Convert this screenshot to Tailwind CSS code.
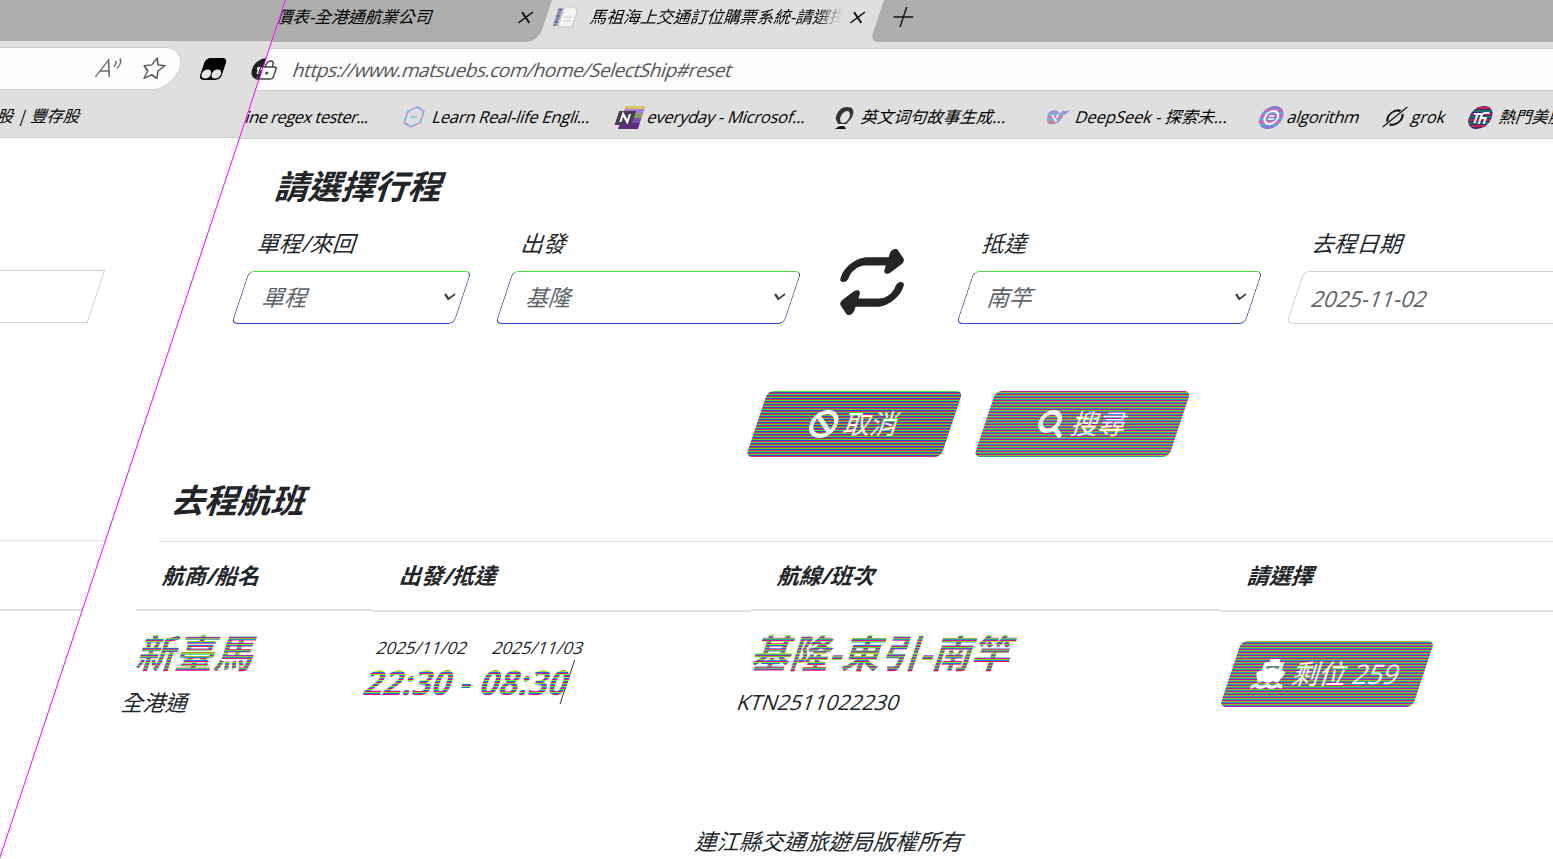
<!DOCTYPE html>
<html lang="zh-Hant">
<head>
<meta charset="utf-8">
<title>馬祖海上交通訂位購票系統</title>
<script src="https://cdn.jsdelivr.net/npm/@tailwindcss/browser@4"></script>
</head>
<body class="w-full h-[859px] overflow-hidden bg-white font-['Open_Sans','Noto_Sans_CJK_TC',sans-serif] text-[#212529]">
<div class="w-full h-[859px] overflow-hidden">
<div class="flex w-[1842px] h-[859px] origin-top-left -skew-x-[18.42deg] whitespace-nowrap">

  <!-- left strip -->
  <aside class="w-[286px] shrink-0 h-full flex flex-col overflow-hidden">
    <div class="h-[41px] bg-[repeating-linear-gradient(#a9adb3_0_1px,#b3a9ad_1px_2px,#adb3a9_2px_3px)]"></div>
    <div class="h-[97px] bg-[#dfdfdf] border-b border-[#d0d0d0] pt-[6px] flex flex-col">
      <div class="flex items-center h-[43px]">
        <div class="w-[203px] shrink-0 h-[43px] bg-[#fdfdfd] border border-l-0 border-[#cdcdcd] rounded-r-full flex items-center">
          <svg class="ml-[120px] w-[26px] h-[24px]" viewBox="0 0 26 24" fill="none" stroke="#6a6a6a" stroke-width="1.5"><path d="M1 20 8.500 3 15 20M4 14h9M16 4q2 2.500 0 6M19.500 1.500q4 5 0 10"/></svg>
          <svg class="ml-[18px] w-[25px] h-[25px]" viewBox="0 0 24 24" fill="none" stroke="#555" stroke-width="1.400" stroke-linejoin="round"><path d="m12 2 3 6.500 7 .9-5.100 4.900 1.300 7.100L12 18l-6.200 3.400 1.300-7.100L2 9.400l7-.9z"/></svg>
        </div>
        <svg class="ml-[22px] w-[22px] h-[22px] shrink-0" viewBox="0 0 22 22"><rect width="22" height="22" rx="5"/><circle cx="6" cy="16" r="4.600" fill="#e4e4e4"/><circle cx="16" cy="16" r="4.600" fill="#e4e4e4"/></svg>
        <svg class="ml-[28px] w-[22px] h-[22px] shrink-0" viewBox="0 0 22 22"><circle cx="11" cy="11" r="11" fill="#1c1e20"/><path d="M5 9h8v3H9v4H6v-4H5z" fill="#fff"/></svg>
      </div>
      <div class="h-[47px] flex items-center pl-[37px] text-[16.300px] text-black pt-[5px]">股 | 豐存股</div>
    </div>
    <div class="h-[132px]"></div>
    <div class="w-[195px] h-[53px] border border-l-0 border-[#dcccd4]"></div>
    <div class="h-[217px]"></div>
    <div class="h-px bg-[#e6dee2]"></div>
    <div class="h-[68px]"></div>
    <div class="h-[2px] bg-[#e4dee2]"></div>
  </aside>

  <!-- main window -->
  <main class="flex-1 h-full flex flex-col relative *:shrink-0">
    <div class="absolute left-[-1px] top-0 w-px h-full bg-[#ff00ff]"></div>

    <!-- tab strip -->
    <div class="h-[42px] flex bg-[#dfdfdf] text-black text-[16.700px]">
      <div class="w-[266px] rounded-br-[12px] overflow-hidden flex items-center pb-[8px] bg-[repeating-linear-gradient(#a9adb3_0_1px,#b3a9ad_1px_2px,#adb3a9_2px_3px)]">
        <span class="-ml-[3px] w-[242px]">價表-全港通航業公司</span>
        <svg class="w-[13px] h-[13px]" viewBox="0 0 12 12" stroke="#111" stroke-width="1.500"><path d="m1 1 10 10M11 1 1 11"/></svg>
      </div>
      <div class="w-[332px] flex items-center pb-[8px]">
        <svg class="ml-[9px] w-[21px] h-[21px]" viewBox="0 0 21 21"><path d="M0 1h5v18H0z" fill="#9aa"/><path d="M1 3h3M1 9h3M1 15h3" stroke="#4a66c0" stroke-width="2"/><path d="M1 6h3M1 12h3M1 18h3" stroke="#b55c8a" stroke-width="1.500"/><path d="M6 0h10l4 4v16H6z" fill="#f4f4f4" stroke="#c4c4c4"/><path d="M9 10h8M9 14h8" stroke="#ccc" fill="none"/></svg>
        <span class="ml-[15px] w-[250px] overflow-hidden mask-r-from-90%">馬祖海上交通訂位購票系統-請選擇</span>
        <svg class="ml-[10px] w-[13px] h-[13px]" viewBox="0 0 12 12" stroke="#111" stroke-width="1.500"><path d="m1 1 10 10M11 1 1 11"/></svg>
      </div>
      <div class="flex-1 rounded-bl-[8px] flex items-center pb-[8px] bg-[repeating-linear-gradient(#a9adb3_0_1px,#b3a9ad_1px_2px,#adb3a9_2px_3px)]">
        <svg class="ml-[15px] w-[20px] h-[20px]" viewBox="0 0 20 20" stroke="#111" stroke-width="1.500"><path d="M10 0v20M0 10h20"/></svg>
      </div>
    </div>

    <!-- address bar -->
    <div class="h-[6px] bg-[#dfdfdf]"></div>
    <div class="h-[43px] flex items-center bg-[#fdfdfd] border-y border-[#cdcdcd]">
      <svg class="-ml-[5px] w-[20px] h-[20px] shrink-0" viewBox="0 0 20 20" fill="none" stroke="#444" stroke-width="1.500"><rect x="2" y="7" width="16" height="12" rx="2"/><path d="M6.500 7V4.500a3.500 3.500 0 0 1 7 0V7"/><circle cx="10" cy="13" r=".8" fill="#444"/></svg>
      <span class="ml-[16px] pt-[2px] text-[19px] tracking-[-0.410px] text-[#555]">https://www.matsuebs.com/home/SelectShip#reset</span>
    </div>

    <!-- favourites -->
    <div class="h-[48px] flex items-center bg-[#dfdfdf] border-b border-[#d0d0d0] text-black text-[16.500px] tracking-[-0.230px] pt-[5px]">
      <span class="-ml-[1px] w-[157px] tracking-[-0.500px]">ine regex tester...</span>
      <svg class="w-[22px] h-[22px] shrink-0" viewBox="0 0 22 22" fill="none" stroke-width="1.800"><path d="m11 1 8 4.500v11L11 21l-8-4.500v-11z" stroke="#6cb4e6" stroke-dasharray="5 3"/><path d="m11 1 8 4.500v11L11 21l-8-4.500v-11z" stroke="#e68ad8" stroke-dasharray="3 5" stroke-dashoffset="3"/><path d="M8 11h6" stroke="#7ad6c0"/></svg>
      <span class="ml-[8px] w-[184px]">Learn Real-life Engli...</span>
      <svg class="w-[25px] h-[23px] shrink-0" viewBox="0 0 25 23"><path d="M5 0h20v3H5z" fill="#d9c45a"/><path d="M5 3h20v4H5z" fill="#a37fd0"/><path d="M5 7h20v5H5z" fill="#8a9a60"/><path d="M5 12h20v5H5z" fill="#7a50b0"/><path d="M5 17h20v6H5z" fill="#602a80"/><path d="M0 5h17v14H0z" fill="#4b3a5c"/><path d="M5 16V8l7 8V8" stroke="#fff" stroke-width="2" fill="none"/></svg>
      <span class="ml-[6px] w-[186px]">everyday - Microsof...</span>
      <svg class="w-[20px] h-[23px] shrink-0" viewBox="0 0 20 23"><path d="M2 12C1 4 5 1 10 1s9 3 8 10c-1 4-3 5-3 7H6c0-2-3-3-4-6z" fill="#333"/><ellipse cx="11" cy="11" rx="4.500" ry="6" fill="#e4e0e2"/><path d="M5 23q6-7 11 0z" fill="#111"/><path d="M8 18h6v2H8z" fill="#eee"/></svg>
      <span class="ml-[8px] w-[184px] tracking-[0px]">英文词句故事生成...</span>
      <svg class="w-[22px] h-[20px] shrink-0" viewBox="0 0 24 20"><path d="M1 5q6-5 11 0 3 2 4-2 3 2 7-1-1 5-5 6 0 9-9 10Q1 18 1 5z" fill="#a78ad0"/><path d="M1 7h18M2 13h14" stroke="#64c4d6" stroke-width="1.600"/><path d="M2 10h16M4 16h10" stroke="#e67890" stroke-width="1.500"/><path d="m6 8 7 7M12 7v4" stroke="#fff" stroke-width="1.800"/></svg>
      <span class="ml-[8px] w-[184px] tracking-[-0.050px]">DeepSeek - 探索未...</span>
      <svg class="w-[23px] h-[23px] shrink-0" viewBox="0 0 23 23"><circle cx="11.500" cy="11.500" r="11.500" fill="#8a78d8"/><path d="M3 4h17M0 10h23M0 16h22" stroke="#e668a8" stroke-width="1.500"/><path d="M1 7h21M0 13h23M3 19h17" stroke="#60b0e8" stroke-width="1.500"/><circle cx="11.500" cy="11.500" r="6.500" fill="none" stroke="#fff" stroke-width="2"/><path d="M8.500 13h6M9 10h5" stroke="#fff" stroke-width="1.500"/></svg>
      <span class="ml-[5px] w-[96px] tracking-[-0.300px]">algorithm</span>
      <svg class="w-[22px] h-[22px] shrink-0" viewBox="0 0 22 22" fill="none" stroke="#151515" stroke-width="2.200"><path d="M14.500 5A7.500 7.500 0 0 0 5 15.500M8 18.200A7.500 7.500 0 0 0 17.500 8"/><path d="M2 21 20 1" stroke-width="1.500"/></svg>
      <span class="ml-[6px] w-[57px] tracking-[-0.100px]">grok</span>
      <svg class="w-[23px] h-[23px] shrink-0" viewBox="0 0 23 23"><circle cx="11.500" cy="11.500" r="11.500" fill="#2e2a80"/><path d="M5 2h13M1 8h21M1 14h21M4 20h15" stroke="#d0204a" stroke-width="1.800"/><path d="M3 5h17M0 11h23M2 17h19" stroke="#1f8a60" stroke-width="1.300"/><path d="M4 8h7M7.500 8v9M12 18V9q0-2 3-2h4M12 12h6M17 12v6" stroke="#fff" stroke-width="2.200" fill="none"/></svg>
      <span class="ml-[8px] tracking-normal">熱門美股</span>
    </div>

    <h1 class="mt-[23px] h-[48px] leading-[48px] pl-[54px] text-[33.300px] font-bold">請選擇行程</h1>

    <!-- search form -->
    <div class="flex mt-[19px] text-[22.500px]">
      <div class="w-[264px] pl-[53px]">
        <label class="block h-[30px] leading-[30px] pl-px">單程/來回</label>
        <div class="mt-[12px] w-[223px] h-[53px] border rounded-[6px] border-x-[#4b4f90] border-t-[#45dc35] border-b-[#3545dc] flex items-center justify-between pl-[23px] pr-[7px] text-[#5c6268]"><span>單程</span><svg class="w-[12px] h-[9px]" viewBox="0 0 12 9" fill="none" stroke="#444" stroke-width="2"><path d="m1 1 5 5 5-5"/></svg></div>
      </div>
      <div class="w-[341px] pl-[53px]">
        <label class="block h-[30px] leading-[30px] pl-px">出發</label>
        <div class="mt-[12px] w-[289px] h-[53px] border rounded-[6px] border-x-[#4b4f90] border-t-[#45dc35] border-b-[#3545dc] flex items-center justify-between pl-[23px] pr-[7px] text-[#5c6268]"><span>基隆</span><svg class="w-[12px] h-[9px]" viewBox="0 0 12 9" fill="none" stroke="#444" stroke-width="2"><path d="m1 1 5 5 5-5"/></svg></div>
      </div>
      <div class="w-[120px] pt-[20px] pl-[42px]">
        <svg class="w-[66px] h-[66px]" viewBox="0 0 512 512" fill="#232527"><path d="M0 224c0 17.700 14.300 32 32 32s32-14.300 32-32c0-53 43-96 96-96H320v32c0 12.900 7.800 24.600 19.800 29.600s25.700 2.200 34.900-6.900l64-64c12.500-12.500 12.500-32.800 0-45.300l-64-64c-9.200-9.200-22.900-11.900-34.900-6.900S320 19.100 320 32V64H160C71.600 64 0 135.600 0 224zm512 64c0-17.700-14.300-32-32-32s-32 14.300-32 32c0 53-43 96-96 96H192V352c0-12.900-7.800-24.600-19.800-29.600s-25.700-2.200-34.900 6.900l-64 64c-12.500 12.500-12.500 32.800 0 45.300l64 64c9.200 9.200 22.900 11.900 34.900 6.900s19.800-16.600 19.800-29.600V448H352c88.400 0 160-71.600 160-160z"/></svg>
      </div>
      <div class="w-[330px] pl-[53px]">
        <label class="block h-[30px] leading-[30px] pl-px">抵達</label>
        <div class="mt-[12px] w-[289px] h-[53px] border rounded-[6px] border-x-[#4b4f90] border-t-[#45dc35] border-b-[#3545dc] flex items-center justify-between pl-[23px] pr-[7px] text-[#5c6268]"><span>南竿</span><svg class="w-[12px] h-[9px]" viewBox="0 0 12 9" fill="none" stroke="#444" stroke-width="2"><path d="m1 1 5 5 5-5"/></svg></div>
      </div>
      <div class="flex-1 pl-[53px]">
        <label class="block h-[30px] leading-[30px] pl-px">去程日期</label>
        <div class="mt-[12px] w-[440px] h-[53px] border rounded-[6px] border-[#d4ced4] flex items-center pl-[17px] pt-[2px] text-[22px] text-[#5c6268]">2025-11-02</div>
      </div>
    </div>

    <div class="flex mt-[67px] pl-[612px] gap-[33px] text-white text-[27px]">
      <div class="w-[195px] h-[66px] rounded-[6px] flex items-center justify-center gap-[7px] bg-[repeating-linear-gradient(#45dc35_0_1px,#3545dc_1px_2px,#dc3545_2px_3px)]">
        <svg class="w-[28px] h-[28px]" viewBox="0 0 28 28" fill="none" stroke="#fff" stroke-width="4"><circle cx="14" cy="14" r="12"/><path d="m5.500 5.500 17 17"/></svg>
        <span>取消</span>
      </div>
      <div class="w-[195px] h-[66px] rounded-[6px] flex items-center justify-center gap-[7px] bg-[repeating-linear-gradient(#b817a2_0_1px,#a2b817_1px_2px,#17a2b8_2px_3px)]">
        <svg class="w-[28px] h-[28px]" viewBox="0 0 28 28" fill="none" stroke="#fff" stroke-linecap="round"><circle cx="11.500" cy="11.500" r="9.200" stroke-width="4.400"/><path d="m18 18 7.500 7.500" stroke-width="4.500"/></svg>
        <span>搜尋</span>
      </div>
    </div>

    <h2 class="mt-[19px] h-[48px] leading-[48px] pl-[55px] text-[33.300px] font-bold">去程航班</h2>

    <!-- sailings -->
    <div class="ml-[53px] mt-[17px] h-[70px] border-t border-t-[#dee0e4] flex text-[22px] font-bold leading-[67px]">
      <div class="w-[237px] pl-[17px] h-[69px] border-b-2 border-[#e2dde1]">航商/船名</div>
      <div class="w-[378px] pl-[17px] h-[70px] border-b-2 border-[#e4dedf]">出發/抵達</div>
      <div class="w-[470px] pl-[17px] h-[69px] border-b-2 border-[#e2dde1]">航線/班次</div>
      <div class="flex-1 pl-[17px] h-[70px] border-b-2 border-[#e4dedf]">請選擇</div>
    </div>
    <div class="ml-[53px] flex text-[22px]">
      <div class="w-[237px] pl-[18px] pt-[15px]">
        <div class="w-max h-[54px] leading-[54px] text-[39px] font-bold text-transparent bg-clip-text bg-[repeating-linear-gradient(#7bff00_0_1px,#007bff_1px_2px,#ff007b_2px_3px)]">新臺馬</div>
        <div class="h-[44px] leading-[44px]">全港通</div>
      </div>
      <div class="w-[378px] pl-[17px] pt-[25px]">
        <div class="flex text-[17px] h-[24px] leading-[24px]"><span class="w-[116px]">2025/11/02</span><span>2025/11/03</span></div>
        <div class="flex w-[202px] h-[44px] border-r border-[#333]"><div class="w-max h-[44px] leading-[44px] text-[34px] font-bold text-transparent bg-clip-text bg-[repeating-linear-gradient(#007bff_0_1px,#ff007b_1px_2px,#7bff00_2px_3px)]">22:30 - 08:30</div></div>
      </div>
      <div class="w-[470px] pl-[18px] pt-[15px]">
        <div class="w-max h-[54px] leading-[54px] text-[39px] font-bold text-transparent bg-clip-text bg-[repeating-linear-gradient(#7bff00_0_1px,#007bff_1px_2px,#ff007b_2px_3px)]">基隆-東引-南竿</div>
        <div class="h-[44px] leading-[44px] text-[21.200px]">KTN2511022230</div>
      </div>
      <div class="pl-[31px] pt-[30px] text-white text-[27px]">
        <div class="w-[193px] h-[66px] rounded-[6px] flex items-center justify-center gap-[7px] bg-[repeating-linear-gradient(#a2b817_0_1px,#17a2b8_1px_2px,#b817a2_2px_3px)]">
          <svg class="w-[32px] h-[30px]" viewBox="0 0 32 30"><path fill="#fff" d="M11 0h10v3h3q2 0 2 2v6l3 1.500q2 1 1 3L26 23.500q-3 0-5-1.500-3 2-5 2t-5-2q-2 1.500-5 1.500l-4-8q-1-2 1-3L6 11V5q0-2 2-2h3z"/><path fill="#5f8a7a" d="M9.500 7h13v3L16 8.500 9.500 10z"/><path fill="#fff" d="M0 26q3 0 5-2 3 2.500 5.500 2.500T16 24q3 2.500 5.500 2.500T27 24q2 2 5 2v3.500q-3 0-5-1.500-3 2-5.500 2T16 28q-3 2-5.500 2T5 28q-2 1.500-5 1.500z"/></svg>
          <span class="tracking-[-0.300px]">剩位 259</span>
        </div>
      </div>
    </div>

    <footer class="mt-[98px] pl-[691px] h-[40px] leading-[40px] text-[22.300px]">連江縣交通旅遊局版權所有</footer>
  </main>
</div>
</div>
</body>
</html>
